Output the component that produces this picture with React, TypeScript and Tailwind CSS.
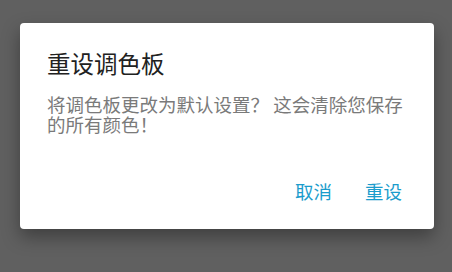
const FONT = '"Noto Sans CJK SC", "Noto Sans", sans-serif';

export default function App() {
  return (
    <div
      className="w-[452px] h-[272px] bg-[#606060] pt-[23px] pl-[20px]"
      style={{ fontFamily: FONT }}
    >
      <div className="w-[414px] h-[206px] bg-white rounded-[4px] shadow-[0_8px_18px_rgba(0,0,0,0.35)] flex flex-col">
        <div className="pt-[25px] px-[27px]">
          <h2 className="text-[23.5px] leading-[30px] text-[#212121]">重设调色板</h2>
          <p className="mt-[16px] text-[18.5px] leading-[20px] text-[#7a7a7a]">
            将调色板更改为默认设置？ 这会清除您保存的所有颜色！
          </p>
        </div>
        <div className="mt-auto flex justify-end gap-[13px] pr-[22px] pb-[19px]">
          <button className="h-[36px] px-[10px] text-[18.5px] text-[#1a9ccc]">取消</button>
          <button className="h-[36px] px-[10px] text-[18.5px] text-[#1a9ccc]">重设</button>
        </div>
      </div>
    </div>
  );
}
